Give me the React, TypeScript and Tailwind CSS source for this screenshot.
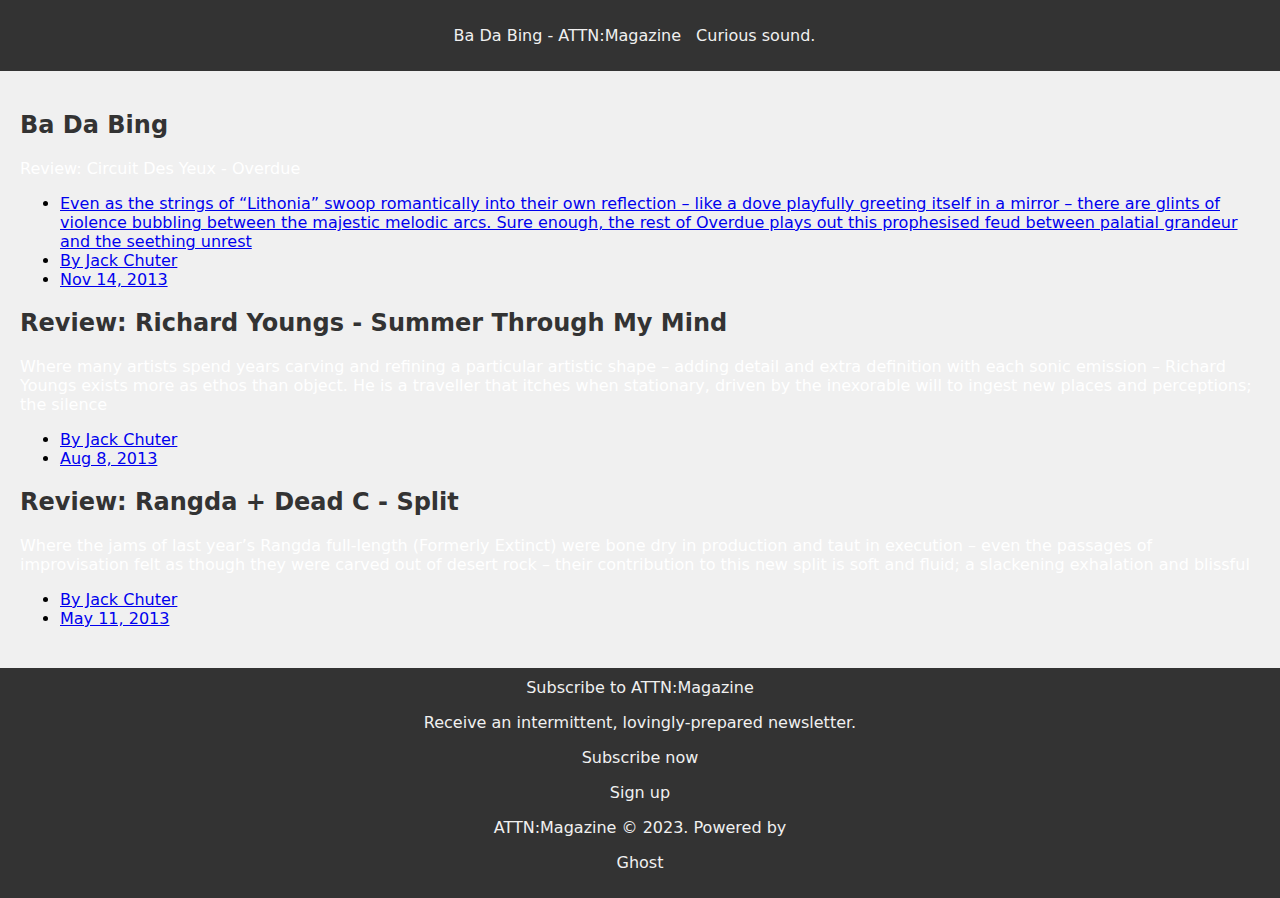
import React from "react";

const sans = { fontFamily: "'DejaVu Sans', 'Liberation Sans', sans-serif" };

function Meta({ author, date }: { author: string; date: string }) {
  return (
    <ul className="list-disc pl-10 my-4 text-black leading-[normal]">
      <li>
        <a href="#" className="text-[#0000ee] underline">{author}</a>
      </li>
      <li>
        <a href="#" className="text-[#0000ee] underline">{date}</a>
      </li>
    </ul>
  );
}

export default function App() {
  return (
    <div className="min-h-screen bg-[#f0f0f0] text-base" style={sans}>
      <header className="h-[71px] bg-[#333] text-[#f0f0f0] flex items-center justify-center gap-[15px] pr-[11px] leading-[normal]">
        <span>Ba Da Bing - ATTN:Magazine</span>
        <span>Curious sound.</span>
      </header>

      <main className="px-5 pt-[40px] pb-[24px]">
        <h1 className="text-[24px] font-bold text-[#333] leading-[normal] mt-0 mb-5">Ba Da Bing</h1>
        <p className="text-white leading-[normal] my-4">Review: Circuit Des Yeux - Overdue</p>
        <ul className="list-disc pl-10 my-4 text-black leading-[normal]">
          <li>
            <a href="#" className="text-[#0000ee] underline">
              Even as the strings of “Lithonia” swoop romantically into their own reflection – like a dove playfully greeting itself in a mirror – there are glints of violence bubbling between the majestic melodic arcs. Sure enough, the rest of Overdue plays out this prophesised feud between palatial grandeur and the seething unrest
            </a>
          </li>
          <li>
            <a href="#" className="text-[#0000ee] underline">By Jack Chuter</a>
          </li>
          <li>
            <a href="#" className="text-[#0000ee] underline">Nov 14, 2013</a>
          </li>
        </ul>

        <h2 className="text-[24px] font-bold text-[#333] leading-[normal] mt-5 mb-5">
          Review: Richard Youngs - Summer Through My Mind
        </h2>
        <p className="text-white leading-[normal] my-4">
          Where many artists spend years carving and refining a particular artistic shape – adding detail and extra definition with each sonic emission – Richard Youngs exists more as ethos than object. He is a traveller that itches when stationary, driven by the inexorable will to ingest new places and perceptions; the silence
        </p>
        <Meta author="By Jack Chuter" date="Aug 8, 2013" />

        <h2 className="text-[24px] font-bold text-[#333] leading-[normal] mt-5 mb-5">
          Review: Rangda + Dead C - Split
        </h2>
        <p className="text-white leading-[normal] my-4">
          Where the jams of last year’s Rangda full-length (Formerly Extinct) were bone dry in production and taut in execution – even the passages of improvisation felt as though they were carved out of desert rock – their contribution to this new split is soft and fluid; a slackening exhalation and blissful
        </p>
        <Meta author="By Jack Chuter" date="May 11, 2013" />
      </main>

      <footer className="bg-[#333] text-[#f0f0f0] text-center pt-[10px] pb-4 leading-[normal]">
        <p className="mb-4">Subscribe to ATTN:Magazine</p>
        <p className="mb-4">Receive an intermittent, lovingly-prepared newsletter.</p>
        <p className="mb-4">Subscribe now</p>
        <p className="mb-4">Sign up</p>
        <p className="mb-4">ATTN:Magazine © 2023. Powered by</p>
        <p className="mb-4">Ghost</p>
      </footer>
    </div>
  );
}
